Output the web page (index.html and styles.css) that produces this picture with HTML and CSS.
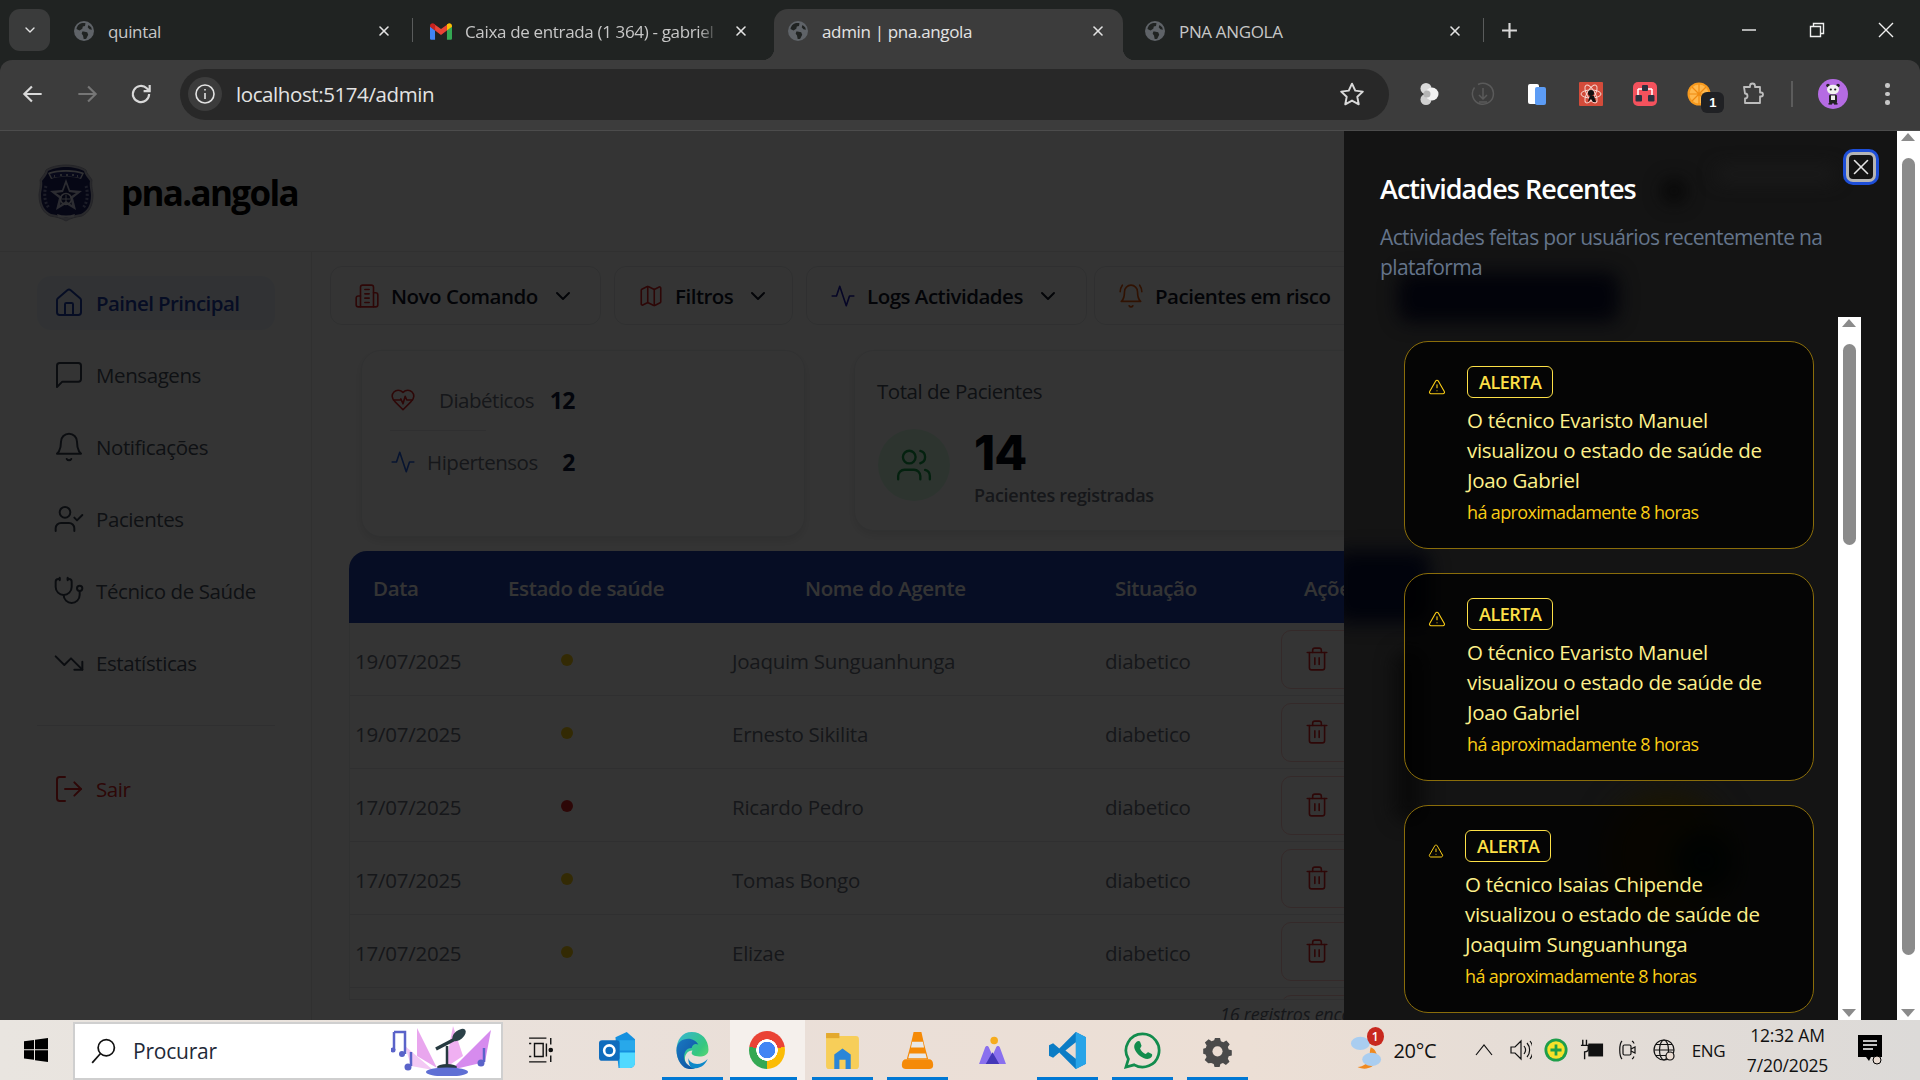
FILE: index.html
```html
<!DOCTYPE html>
<html lang="pt">
<head>
<meta charset="utf-8">
<title>admin | pna.angola</title>
<link rel="stylesheet" href="styles.css">
</head>
<body>
<svg class="sprite" aria-hidden="true">
  <symbol id="i-home" viewBox="0 0 24 24"><path d="M15 21v-8a1 1 0 0 0-1-1h-4a1 1 0 0 0-1 1v8"/><path d="M3 10a2 2 0 0 1 .709-1.528l7-5.999a2 2 0 0 1 2.582 0l7 5.999A2 2 0 0 1 21 10v9a2 2 0 0 1-2 2H5a2 2 0 0 1-2-2z"/></symbol>
  <symbol id="i-msg" viewBox="0 0 24 24"><path d="M21 15a2 2 0 0 1-2 2H7l-4 4V5a2 2 0 0 1 2-2h14a2 2 0 0 1 2 2z"/></symbol>
  <symbol id="i-bell" viewBox="0 0 24 24"><path d="M6 8a6 6 0 0 1 12 0c0 7 3 9 3 9H3s3-2 3-9"/><path d="M10.3 21a1.94 1.94 0 0 0 3.4 0"/></symbol>
  <symbol id="i-ring" viewBox="0 0 24 24"><path d="M6 8a6 6 0 0 1 12 0c0 7 3 9 3 9H3s3-2 3-9"/><path d="M10.3 21a1.94 1.94 0 0 0 3.4 0"/><path d="M4 2C2.8 3.7 2 5.7 2 8"/><path d="M22 8c0-2.3-.8-4.3-2-6"/></symbol>
  <symbol id="i-usercheck" viewBox="0 0 24 24"><path d="M16 21v-2a4 4 0 0 0-4-4H6a4 4 0 0 0-4 4v2"/><circle cx="9" cy="7" r="4"/><path d="m16 11 2 2 4-4"/></symbol>
  <symbol id="i-steth" viewBox="0 0 24 24"><path d="M11 2v2"/><path d="M5 2v2"/><path d="M5 3H4a2 2 0 0 0-2 2v4a6 6 0 0 0 12 0V5a2 2 0 0 0-2-2h-1"/><path d="M8 15a6 6 0 0 0 12 0v-3"/><circle cx="20" cy="10" r="2"/></symbol>
  <symbol id="i-trend" viewBox="0 0 24 24"><path d="m22 17-8.5-8.5-5 5L2 7"/><path d="M16 17h6v-6"/></symbol>
  <symbol id="i-logout" viewBox="0 0 24 24"><path d="M9 21H5a2 2 0 0 1-2-2V5a2 2 0 0 1 2-2h4"/><path d="m16 17 5-5-5-5"/><path d="M21 12H9"/></symbol>
  <symbol id="i-building" viewBox="0 0 24 24"><path d="M6 22V4a2 2 0 0 1 2-2h8a2 2 0 0 1 2 2v18Z"/><path d="M6 12H4a2 2 0 0 0-2 2v6a2 2 0 0 0 2 2h2"/><path d="M18 9h2a2 2 0 0 1 2 2v9a2 2 0 0 1-2 2h-2"/><path d="M10 6h4M10 10h4M10 14h4M10 18h4"/></symbol>
  <symbol id="i-map" viewBox="0 0 24 24"><path d="M14.106 5.553a2 2 0 0 0 1.788 0l3.659-1.83A1 1 0 0 1 21 4.619v12.764a1 1 0 0 1-.553.894l-4.553 2.277a2 2 0 0 1-1.788 0l-4.212-2.106a2 2 0 0 0-1.788 0l-3.659 1.83A1 1 0 0 1 3 19.381V6.618a1 1 0 0 1 .553-.894l4.553-2.277a2 2 0 0 1 1.788 0z"/><path d="M15 5.764v15"/><path d="M9 3.236v15"/></symbol>
  <symbol id="i-activity" viewBox="0 0 24 24"><path d="M22 12h-4l-3 9L9 3l-3 9H2"/></symbol>
  <symbol id="i-chev" viewBox="0 0 24 24"><path d="m6 9 6 6 6-6"/></symbol>
  <symbol id="i-heart" viewBox="0 0 24 24"><path d="M19 14c1.49-1.46 3-3.21 3-5.5A5.5 5.5 0 0 0 16.5 3c-1.76 0-3 .5-4.5 2-1.5-1.5-2.74-2-4.5-2A5.5 5.5 0 0 0 2 8.5c0 2.3 1.5 4.05 3 5.5l7 7Z"/><path d="M3.22 12H9.5l.5-1 2 4.5 2-7 1.5 3.5h5.27"/></symbol>
  <symbol id="i-users" viewBox="0 0 24 24"><path d="M16 21v-2a4 4 0 0 0-4-4H6a4 4 0 0 0-4 4v2"/><circle cx="9" cy="7" r="4"/><path d="M22 21v-2a4 4 0 0 0-3-3.87"/><path d="M16 3.13a4 4 0 0 1 0 7.75"/></symbol>
  <symbol id="i-trash" viewBox="0 0 24 24"><path d="M3 6h18"/><path d="M19 6v14c0 1-1 2-2 2H7c-1 0-2-1-2-2V6"/><path d="M8 6V4c0-1 1-2 2-2h4c1 0 2 1 2 2v2"/><path d="M10 11v6M14 11v6"/></symbol>
  <symbol id="i-warn" viewBox="0 0 24 24"><path d="m21.73 18-8-14a2 2 0 0 0-3.48 0l-8 14A2 2 0 0 0 4 21h16a2 2 0 0 0 1.73-3"/><path d="M12 9v4"/><path d="M12 17h.01"/></symbol>
  <symbol id="i-x" viewBox="0 0 24 24"><path d="M18 6 6 18"/><path d="m6 6 12 12"/></symbol>
  <symbol id="i-globe" viewBox="0 0 20 20"><circle cx="10" cy="10" r="10" fill="#5f6368"/><path d="M5 3.5c2-1.4 4.500-1.800 6.500-1.200l-.5 2.700-2.200.5-.5 2.200L5.500 9.500 2.500 8C2.800 6 3.700 4.500 5 3.500ZM9.500 10.500l3.700.8 1 2.400-2 4.100c-1 .4-1.800.3-2.500.2l-.7-3.500-1.300-1.800.6-2.100ZM14.500 4l2.700 2.200.7 2.600-2.500-.6-1.700-2Z" fill="#202322"/></symbol>
</svg>

<div class="tabstrip">
  <button class="tabsearch" aria-label="Pesquisar separadores"><svg class="ic s16 w2 light"><use href="#i-chev"/></svg></button>
  <div class="tab sep">
    <svg class="favicon"><use href="#i-globe"/></svg>
    <span class="tab-title">quintal</span>
    <svg class="ic tab-close"><use href="#i-x"/></svg>
  </div>
  <div class="tab">
    <svg class="favicon gmail" viewBox="0 0 24 18"><path d="M0 3v13.500C0 17.300.7 18 1.500 18H5.500V8Z" fill="#4285f4"/><path d="M24 3v13.500c0 .8-.7 1.500-1.500 1.500H18.500V8Z" fill="#34a853"/><path d="M5.500 8V1.500L12 6.400l6.500-4.900V8L12 12.900Z" fill="#ea4335"/><path d="M0 3c0-2.500 2.800-3.800 4.800-2.300L5.500 1.200V8L0 3.900Z" fill="#c5221f"/><path d="M24 3c0-2.500-2.800-3.800-4.800-2.300l-.7.500V8L24 3.900Z" fill="#fbbc04"/></svg>
    <span class="tab-title faded">Caixa de entrada (1 364) - gabriel</span>
    <svg class="ic tab-close"><use href="#i-x"/></svg>
  </div>
  <div class="tab active">
    <svg class="favicon"><use href="#i-globe"/></svg>
    <span class="tab-title">admin | pna.angola</span>
    <svg class="ic tab-close"><use href="#i-x"/></svg>
  </div>
  <div class="tab sep">
    <svg class="favicon"><use href="#i-globe"/></svg>
    <span class="tab-title">PNA ANGOLA</span>
    <svg class="ic tab-close"><use href="#i-x"/></svg>
  </div>
  <svg class="newtab" viewBox="0 0 16 16"><path d="M8 1v14M1 8h14"/></svg>
  <div class="winctl">
    <svg viewBox="0 0 16 16"><path d="M1 8h14"/></svg>
    <svg viewBox="0 0 16 16"><path d="M1.500 4.500h10v10h-10zM4.500 4V1.500h10v10H12"/></svg>
    <svg viewBox="0 0 16 16"><path d="m1 1 14 14M15 1 1 15"/></svg>
  </div>
</div>

<div class="toolbar">
  <div class="navbtn"><svg viewBox="0 0 24 24" class="navic"><path d="M20 12H5M11 5l-7 7 7 7"/></svg></div>
  <div class="navbtn dim"><svg viewBox="0 0 24 24" class="navic"><path d="M4 12h15M13 5l7 7-7 7"/></svg></div>
  <div class="navbtn"><svg viewBox="0 0 24 24" class="navic"><path d="M19.500 12a7.500 7.500 0 1 1-2.200-5.300L20 9.400M20 3.800v5.600h-5.600"/></svg></div>
  <div class="omnibox">
    <span class="siteinfo"><svg viewBox="0 0 24 24"><circle cx="12" cy="12" r="9"/><path d="M12 11v6M12 7v1.500"/></svg></span>
    <span class="url">localhost:5174/admin</span>
    <svg class="star" viewBox="0 0 24 24"><path d="M12 2.500 15 8.900l7 .9-5.100 4.800 1.300 6.900L12 18.100l-6.200 3.400 1.300-6.900L2 9.800l7-.9Z"/></svg>
  </div>
  <div class="exts">
    <span class="ext"><svg viewBox="0 0 24 24"><circle cx="9" cy="6.500" r="5.500" fill="#d9d9d9"/><circle cx="9" cy="17.500" r="5.500" fill="#cfcfcf"/><circle cx="15" cy="12" r="6.500" fill="#f2f2f2"/><circle cx="10" cy="12" r="3.500" fill="#b5b5b5"/></svg></span>
    <span class="ext"><svg viewBox="0 0 24 24" fill="none" stroke="#5a5a5a" stroke-width="1.500"><path d="M7 2.500a10.500 10.500 0 1 1-3.500 3"/><path d="M12 6v10M8 13l4 4 4-4M8 20h8"/></svg></span>
    <span class="ext"><svg viewBox="0 0 24 24"><rect x="3" y="2" width="11" height="20" rx="2" fill="#fff"/><rect x="10" y="5" width="11" height="18" rx="2" fill="#5c9cf5"/></svg></span>
    <span class="ext"><svg viewBox="0 0 24 24"><rect width="24" height="24" rx="1" fill="#d34b3a"/><g fill="none" stroke="#f6d9d3" stroke-width="1"><ellipse cx="12" cy="12" rx="10" ry="4"/><ellipse cx="12" cy="12" rx="10" ry="4" transform="rotate(60 12 12)"/><ellipse cx="12" cy="12" rx="10" ry="4" transform="rotate(120 12 12)"/></g><circle cx="12" cy="11" r="3" fill="#111"/><path d="M11 14h4l2 6h-3l-2-3-3 3 1-4Z" fill="#111"/></svg></span>
    <span class="ext"><svg viewBox="0 0 24 24"><rect width="24" height="24" rx="5" fill="#f4525d"/><path d="M5 7h14M5 7v7M19 7v7" stroke="#fff" stroke-width="1.500" fill="none"/><rect x="9" y="3" width="6" height="6" rx="1" fill="#2b3240"/><rect x="2.500" y="13" width="6.500" height="6.500" rx="1" fill="#2b3240"/><rect x="15" y="13" width="6.500" height="6.500" rx="1" fill="#2b3240"/></svg></span>
    <span class="ext badged"><svg viewBox="0 0 24 24"><circle cx="12" cy="12" r="11.500" fill="#f79a1e"/><circle cx="12" cy="12" r="9.500" fill="#ffb84d"/><path d="M12 2v20M2 12h20M5 5l14 14M19 5 5 19" stroke="#f08a10" stroke-width="1.200"/></svg><span class="extbadge">1</span></span>
    <span class="ext"><svg viewBox="0 0 24 24" fill="none" stroke="#bdbdbd" stroke-width="1.800" stroke-linejoin="round"><path d="M3 5h6V4a2.500 2.500 0 0 1 5 0v1h5v5.500h1a2 2 0 0 1 0 4h-1V21H4v-4.500a2.500 2.500 0 0 0 0-5Z"/></svg></span>
  </div>
  <span class="tbsep"></span>
  <span class="avatar"><svg viewBox="0 0 30 30"><circle cx="15" cy="15" r="15" fill="#b56be3"/><circle cx="10" cy="6.500" r="1.800" fill="#222"/><circle cx="20" cy="6.500" r="1.800" fill="#222"/><ellipse cx="15" cy="10.500" rx="6" ry="4.800" fill="#f2f2f2"/><circle cx="12.800" cy="10.500" r="1.100" fill="#222"/><circle cx="17.200" cy="10.500" r="1.100" fill="#222"/><rect x="11" y="15.500" width="8" height="9" rx="1.500" fill="#222"/><rect x="13" y="16.500" width="4" height="4.500" fill="#eee"/><rect x="10.500" y="24" width="3.500" height="1.600" fill="#222"/><rect x="16" y="24" width="3.500" height="1.600" fill="#222"/></svg></span>
  <span class="kebab"><i></i><i></i><i></i></span>
</div>

<div class="screen">
  <div class="viewport">
    <div class="app">
      <header class="apphead">
        <svg class="logo" viewBox="0 0 56 58"><path d="M28 1c8 0 16 2 20 5 1 4 3 5 6 10-1 6 1 12 1 15 0 12-5 18-11 21-6 1-11 2-16 5-5-3-10-4-16-5C6 49 1 43 1 31c0-3 2-9 1-15 3-5 5-6 6-10 4-3 12-5 20-5Z" fill="#c8c8d8" stroke="#b0b0c0" stroke-width="1"/><path d="M28 3c7 0 14 2 18 4 1 4 3 6 6 10-1 5 1 10 1 14 0 11-4 16-10 19-6 1-10 2-15 4-5-2-9-3-15-4C7 47 3 42 3 31c0-4 2-9 1-14 3-4 5-6 6-10 4-2 11-4 18-4Z" fill="#1f2468"/><path d="M10 9c8-4 28-4 36 0l-3 6c-7-3-23-3-30 0Z" fill="#f0f0f8"/><path d="M12 10c8-3 24-3 32 0l-2 4c-7-2-21-2-28 0Z" fill="#2a2f80"/><path d="M16 12h1M22 11h2M28 11h2M34 11h2M39 12h1" stroke="#fff" stroke-width="1.500"/><path d="M28 15l4 11 12 1-9 7 3 12-10-6-10 6 3-12-9-7 12-1Z" fill="#d6d8f0"/><path d="M28 20l3 8 7 1-6 4 2 8-6-4-6 4 2-8-6-4 7-1Z" fill="#1a1e58"/><circle cx="28" cy="35" r="5.500" fill="none" stroke="#e8e8f8" stroke-width="1.500"/><path d="M24 35h8M28 31v8" stroke="#e8e8f8"/><path d="M8 22c-2 6-2 16 3 22M48 22c2 6 2 16-3 22" fill="none" stroke="#8a8ec0" stroke-width="3" stroke-dasharray="2 2"/><path d="M19 50c6 2 12 2 18 0l-1 3c-5 1-11 1-16 0Z" fill="#e8e8f4"/></svg>
        <span class="brand">pna.angola</span>
      </header>
      <div class="appbody">
        <nav class="sidebar">
          <a class="navitem current"><svg class="ic s32"><use href="#i-home"/></svg><span>Painel Principal</span></a>
          <a class="navitem"><svg class="ic s32"><use href="#i-msg"/></svg><span>Mensagens</span></a>
          <a class="navitem"><svg class="ic s32"><use href="#i-bell"/></svg><span>Notificações</span></a>
          <a class="navitem"><svg class="ic s32"><use href="#i-usercheck"/></svg><span>Pacientes</span></a>
          <a class="navitem"><svg class="ic s32"><use href="#i-steth"/></svg><span>Técnico de Saúde</span></a>
          <a class="navitem"><svg class="ic s32"><use href="#i-trend"/></svg><span>Estatísticas</span></a>
          <hr class="navrule">
          <a class="navitem logout"><svg class="ic s32"><use href="#i-logout"/></svg><span>Sair</span></a>
        </nav>
        <main class="content">
          <div class="actions">
            <button class="action a1"><svg class="ic s26 red"><use href="#i-building"/></svg><span>Novo Comando</span><svg class="ic s24 w2 ink"><use href="#i-chev"/></svg></button>
            <button class="action a2"><svg class="ic s26 red"><use href="#i-map"/></svg><span>Filtros</span><svg class="ic s24 w2 ink"><use href="#i-chev"/></svg></button>
            <button class="action a3"><svg class="ic s26 indigo"><use href="#i-activity"/></svg><span>Logs Actividades</span><svg class="ic s24 w2 ink"><use href="#i-chev"/></svg></button>
            <button class="action a4"><svg class="ic s26 orange"><use href="#i-ring"/></svg><span>Pacientes em risco</span></button>
          </div>
          <div class="stats">
            <section class="card conditions">
              <div class="cond c1"><svg class="ic s26 red"><use href="#i-heart"/></svg><span class="cond-label">Diabéticos</span><b>12</b></div>
              <hr class="condrule">
              <div class="cond c2"><svg class="ic s26 blue"><use href="#i-activity"/></svg><span class="cond-label">Hipertensos</span><b>2</b></div>
            </section>
            <section class="card total">
              <h3>Total de Pacientes</h3>
              <div class="total-row">
                <span class="total-ic"><svg class="ic s38 green"><use href="#i-users"/></svg></span>
                <div><div class="total-num">14</div><div class="total-sub">Pacientes registradas</div></div>
              </div>
            </section>
          </div>
          <div class="table">
            <div class="thead"><span>Data</span><span>Estado de saúde</span><span>Nome do Agente</span><span>Situação</span><span>Ações</span></div>
            <div class="tbody">
              <div class="trow"><span>19/07/2025</span><i class="dot warn"></i><span>Joaquim Sunguanhunga</span><span>diabetico</span><button class="del"><svg class="ic s26 red"><use href="#i-trash"/></svg></button></div>
              <div class="trow"><span>19/07/2025</span><i class="dot warn"></i><span>Ernesto Sikilita</span><span>diabetico</span><button class="del"><svg class="ic s26 red"><use href="#i-trash"/></svg></button></div>
              <div class="trow"><span>17/07/2025</span><i class="dot bad"></i><span>Ricardo Pedro</span><span>diabetico</span><button class="del"><svg class="ic s26 red"><use href="#i-trash"/></svg></button></div>
              <div class="trow"><span>17/07/2025</span><i class="dot warn"></i><span>Tomas Bongo</span><span>diabetico</span><button class="del"><svg class="ic s26 red"><use href="#i-trash"/></svg></button></div>
              <div class="trow"><span>17/07/2025</span><i class="dot warn"></i><span>Elizae</span><span>diabetico</span><button class="del"><svg class="ic s26 red"><use href="#i-trash"/></svg></button></div>
              <div class="trow tail"><button class="del"></button></div>
            </div>
            <div class="tfoot">16 registros encontrados</div>
          </div>
        </main>
      </div>
    </div>
    <div class="dim-layer"></div>
    <aside class="drawer">
      <i class="blob b-btn"></i><i class="blob b-user"></i><i class="blob b-name"></i><i class="blob b-head"></i><i class="blob b-col"></i><i class="blob b-sun"></i><i class="blob b-leaf"></i>
      <button class="drawer-close" aria-label="Fechar"><svg class="ic s26 w15 pale"><use href="#i-x"/></svg></button>
      <h2>Actividades Recentes</h2>
      <p class="drawer-sub">Actividades feitas por usuários recentemente na plataforma</p>
      <div class="feed">
        <div class="feed-list">
          <article class="alert">
            <svg class="ic alert-ic"><use href="#i-warn"/></svg>
            <div><span class="alert-tag">ALERTA</span><p>O técnico Evaristo Manuel visualizou o estado de saúde de Joao Gabriel</p><time>há aproximadamente 8 horas</time></div>
          </article>
          <article class="alert">
            <svg class="ic alert-ic"><use href="#i-warn"/></svg>
            <div><span class="alert-tag">ALERTA</span><p>O técnico Evaristo Manuel visualizou o estado de saúde de Joao Gabriel</p><time>há aproximadamente 8 horas</time></div>
          </article>
          <article class="alert narrow">
            <svg class="ic alert-ic"><use href="#i-warn"/></svg>
            <div><span class="alert-tag">ALERTA</span><p>O técnico Isaias Chipende visualizou o estado de saúde de Joaquim Sunguanhunga</p><time>há aproximadamente 8 horas</time></div>
          </article>
        </div>
        <div class="sbar inner"><i class="up"></i><i class="thumb"></i><i class="down"></i></div>
      </div>
    </aside>
  </div>
  <div class="sbar page"><i class="up"></i><i class="thumb"></i><i class="down"></i></div>
</div>

<footer class="taskbar">
  <div class="start"><svg viewBox="0 0 24 24"><path d="M0 3.300 10 2v9.300H0ZM11 1.800 24 0v11.300H11ZM0 12.300h10v9.500L0 20.500ZM11 12.300h13V24l-13-1.800Z" fill="#000"/></svg></div>
  <div class="searchbox">
    <svg class="lens" viewBox="0 0 24 24"><circle cx="15" cy="9" r="7.500"/><path d="M9.500 14.500 2 23"/></svg>
    <span>Procurar</span>
    <svg class="searchart" viewBox="0 0 102 50">
      <path d="M26 2 46 42 26 30Z" fill="#e9a6ee"/><path d="M62 0 54 42 72 30Z" fill="#f0b0f2"/><path d="M100 4 60 44 94 36Z" fill="#d68bee"/><path d="M14 20 42 44 20 40Z" fill="#f3c8f4"/>
      <path d="M3 6h11v22M3 6v18" stroke="#5a63c9" stroke-width="2.500" fill="none"/><circle cx="2" cy="24" r="2.500" fill="#5a63c9"/><circle cx="11" cy="28" r="3" fill="#5a63c9"/>
      <path d="M20 26v14" stroke="#5a63c9" stroke-width="2.500"/><circle cx="17" cy="41" r="3.500" fill="#5a63c9"/>
      <path d="M93 22v14" stroke="#5a63c9" stroke-width="2.500"/><circle cx="90" cy="37" r="3.500" fill="#5a63c9"/>
      <path d="M66 12 45 23" stroke="#263a40" stroke-width="3.500"/><ellipse cx="68" cy="9" rx="4.500" ry="8" transform="rotate(50 68 9)" fill="#2b4148"/>
      <path d="M56 20v22" stroke="#263a40" stroke-width="2.500"/><ellipse cx="56" cy="41" rx="10" ry="3" fill="#263a40"/><ellipse cx="56" cy="46" rx="21" ry="4.500" fill="#5f6fd4"/>
    </svg>
  </div>
  <div class="taskview"><svg viewBox="0 0 24 24"><path d="M1 1h16M1 23h16M6 6h8v12H6zM1 6h2M1 18h2M17 6v12M21 1v6M21 17v6" /><circle cx="21" cy="12" r="1.500" fill="#111"/></svg></div>
  <div class="app-ic"><svg viewBox="0 0 36 36"><path d="M16 5 27 0l8 7v22c0 4-2 6-5 6H19Z" fill="#1490df"/><path d="M20 8h15v10H20Z" fill="#28a8ea"/><path d="M20 20h15v10c0 3-2 5-5 5H20Z" fill="#50d9ff"/><rect x="0" y="8" width="20" height="20" rx="3" fill="#0f6cbd"/><circle cx="10" cy="18" r="5" fill="none" stroke="#fff" stroke-width="2.500"/></svg></div>
  <div class="app-ic running"><svg viewBox="0 0 38 44"><defs><linearGradient id="edgeA" x1="0" y1="0" x2="1" y2="1"><stop offset="0" stop-color="#37b5d6"/><stop offset=".6" stop-color="#35c77f"/><stop offset="1" stop-color="#7ae36a"/></linearGradient><linearGradient id="edgeB" x1="0" y1="0" x2="1" y2="1"><stop offset="0" stop-color="#1a78c2"/><stop offset="1" stop-color="#0d4f9e"/></linearGradient></defs><path d="M18 0C30 0 38 9 38 21c0 6-5 8-11 8-6 0-9-2-9-4 0-1 .5-2 1-3-6 0-9 5-9 10 0 6 5 11 12 12C9 45 0 35 0 22 0 9 7 0 18 0Z" fill="url(#edgeA)"/><path d="M0 22C0 12 7 8 14 8c5 0 10 3 12 7-4-2-7 0-8 4-7 0-9 6-9 11 0 6 5 11 13 13-3 1-5 1-7 1C7 44 0 33 0 22Z" fill="url(#edgeB)"/><path d="M14 31c2 8 15 10 23 1-4 10-13 12-19 11-3-3-4-7-4-12Z" fill="#0e88c9"/></svg></div>
  <div class="app-ic running focus"><span class="chrome"></span></div>
  <div class="app-ic running"><svg viewBox="-2 0 36 36"><path d="M0 4c0-2 1-3 3-3h7l3 3h16c2 0 3 1 3 3v26c0 2-1 3-3 3H3c-2 0-3-1-3-3Z" fill="#f7ce59"/><path d="M0 1h13v5H0Z" fill="#e3a92e"/><path d="M8 36V22l8-6 8 6v14h-5v-9h-6v9Z" fill="#2a86d8"/></svg></div>
  <div class="app-ic running"><svg viewBox="0 0 32 38"><path d="M12 0h8l3 13 4 15H5l4-15Z" fill="#f58a07"/><path d="M10.500 10h11l1.200 6H9.300ZM7.800 22h16.400l1.300 5H6.500Z" fill="#e8e8e8"/><path d="M4 28h24c2 0 4 2 4 5v2c0 2-2 3-4 3H4c-2 0-4-1-4-3v-2c0-3 2-5 4-5Z" fill="#f58a07"/></svg></div>
  <div class="app-ic"><svg viewBox="-4 -5 44 44"><circle cx="20" cy="5" r="4.500" fill="#f6ac1d"/><path d="M2 33 9 14c1-3 4-3 5 0l4 9 4-9c1-3 4-3 5 0l7 19Z" fill="#8a70ee"/><path d="M10 33 18 19l8 14Z" fill="#4437b8"/></svg></div>
  <div class="app-ic running"><svg viewBox="0 0 36 36"><path d="M26 0 36 5v26l-10 5L10 20l-6 5-4-2V13l4-2 6 5Z" fill="#0b7cc5"/><path d="M26 0 36 5v26l-10 5Z" fill="#28a4e8"/><path d="M26 10v16l-10-8Z" fill="#eadcd2"/></svg></div>
  <div class="app-ic running"><svg viewBox="0 0 38 38"><path d="M19 2a17 17 0 0 0-14.500 25.800L2 36l8.500-2.300A17 17 0 1 0 19 2Z" fill="none" stroke="#128c4d" stroke-width="2.800"/><path d="M13 10c1-1 3-1 3.500 0l1.500 4c.2.600-1.500 2.400-1.500 3 1 2.500 3 4.500 5.500 5.500.7 0 2-2 3-1.800l3.500 1.800c.8.500.5 2.500-.5 3.500-2 2-5 2-8 .7-5-2-9-7-9.500-11-.2-2.200.7-4 2.500-5.700Z" fill="#128c4d"/></svg></div>
  <div class="app-ic running"><svg viewBox="-6 -6 44 44"><path d="M13 1h6l1 4 3 1.300L26.500 4l4 4.500-2.200 3.300 1 3 3.700 1v6l-3.700 1-1 3 2 3.500-4.300 3.800-3.500-2.200-3 1.100-1 3.500h-6l-1-3.500-3-1.100L5 31.200.8 27.400 3 23.800l-1.200-3L-1 20v-6l3-1 1.100-3L1 6.400 5.400 2.600 9 5l3-1.100Z" fill="#4a4a4a"/><circle cx="16" cy="17" r="6" fill="#eadcd2"/></svg></div>
  <div class="weather">
    <span class="weather-ic"><svg viewBox="0 0 34 42"><path d="M22 18c6 2 8 10 6 15-3 7-12 10-20 6 6 0 12-4 13-11 0-4 0-7 1-10Z" fill="#f08a20"/><ellipse cx="11" cy="14" rx="10" ry="7" fill="#a9cdf0"/><ellipse cx="23" cy="31" rx="10" ry="7" fill="#a9cdf0"/></svg><b class="w-badge">1</b></span>
    <span class="temp">20°C</span>
  </div>
  <div class="tray">
    <span><svg viewBox="0 0 24 24"><path d="m4 17 8-10 8 10"/></svg></span>
    <span><svg viewBox="0 0 24 24"><path d="M3 9h4l6-6v18l-6-6H3ZM16 8c2 2.500 2 5.500 0 8M19 5c3.500 4 3.500 10 0 14M22 3c4 5 4 13 0 18"/></svg></span>
    <span><svg viewBox="0 0 26 26" class="plain"><circle cx="13" cy="13" r="12.500" fill="#1e9e4a"/><circle cx="13" cy="13" r="9.500" fill="#f5e12a"/><path d="M13 7v12M7 13h12" stroke="#1e9e4a" stroke-width="3"/></svg></span>
    <span><svg viewBox="0 0 26 24" class="plain"><rect x="9" y="5" width="16" height="14" fill="#111"/><path d="M3 1v6M7 1v6M1 7h8v4c0 2-2 3-4 3v8" stroke="#111" fill="none" stroke-width="1.500"/></svg></span>
    <span><svg viewBox="0 0 24 24"><rect x="7" y="7" width="8" height="10" rx="1.500"/><path d="m15 11 4-2v6l-4-2M6 3C3 6 3 18 6 21M16 3c1 .6 1.800 1.500 2 2.500M18 18.500c-.4 1-1 2-2 2.500"/></svg></span>
    <span><svg viewBox="0 0 24 24"><circle cx="12" cy="12" r="10"/><ellipse cx="12" cy="12" rx="4.500" ry="10"/><path d="M2 12h20M4 6.500h16M4 17.500h16"/><circle cx="18" cy="18" r="4" fill="#eadcd2"/></svg></span>
  </div>
  <span class="lang">ENG</span>
  <div class="clock"><span>12:32 AM</span><span>7/20/2025</span></div>
  <div class="notif"><svg viewBox="0 0 24 30"><path d="M0 0h24v22H13l-2 4-3-4H0Z" fill="#000"/><path d="M5 6h14M5 10h14M5 14h10" stroke="#fff" stroke-width="1.500"/><circle cx="19" cy="25" r="4" fill="#eadcd2" stroke="#000"/></svg></div>
</footer>
</body>
</html>
```

FILE: styles.css
```css
* { box-sizing: border-box; }
html, body { margin: 0; width: 1920px; height: 1080px; overflow: hidden; }
body {
  display: flex; flex-direction: column;
  font-family: "Open Sans", "Noto Sans", "Liberation Sans", sans-serif;
  letter-spacing: -.03em;
  background: #202322;
}
.sprite { display: none; }
button { font: inherit; letter-spacing: inherit; border: 0; background: none; padding: 0; color: inherit; }
h2, h3, p { margin: 0; font-weight: inherit; }
i { font-style: normal; display: block; }

.ic { fill: none; stroke: currentColor; stroke-width: 1.5; stroke-linecap: round; stroke-linejoin: round; flex: none; }
.s16 { width: 16px; height: 16px; } .s24 { width: 24px; height: 24px; } .s26 { width: 26px; height: 26px; }
.s30 { width: 30px; height: 30px; } .s32 { width: 32px; height: 32px; } .s38 { width: 38px; height: 38px; }
.w2 { stroke-width: 2; } .w15 { stroke-width: 1.5; }
.light { color: #e3e3e3; } .pale { color: #e5e5e5; }
.ink { color: #111827; } .red { color: #dc2626; } .blue { color: #2563eb; } .indigo { color: #1e1eb8; } .orange { color: #ea580c; } .green { color: #16a34a; }

/* browser chrome */
.tabstrip { height: 60px; flex: none; display: flex; align-items: flex-start; padding-left: 9px; background: #202322; font-size: 17px; color: #c7c7c7; letter-spacing: -.02em; }
.tabsearch { width: 41px; height: 42px; margin: 9px 10px 0 0; border-radius: 11px; background: #3a3b3b; display: flex; align-items: center; justify-content: center; }
.tab { position: relative; width: 349px; height: 51px; margin: 9px 8px 0 0; padding: 0 17px 7px 14px; display: flex; align-items: center; gap: 14px; border-radius: 14px 14px 0 0; }
.tab.sep::after { content: ""; position: absolute; right: -4px; top: 9px; height: 24px; width: 1px; background: #5a5c5c; }
.tab.active { background: #3c3c3c; color: #e3e3e3; }
.tab.active::before { content: ""; position: absolute; left: -12px; bottom: 0; width: 12px; height: 12px; background: radial-gradient(circle at 0 0, transparent 12px, #3c3c3c 12.5px); }
.tab.active::after { content: ""; position: absolute; right: -12px; bottom: 0; width: 12px; height: 12px; background: radial-gradient(circle at 100% 0, transparent 12px, #3c3c3c 12.5px); }
.favicon { width: 20px; height: 20px; flex: none; }
.favicon.gmail { width: 22px; height: 17px; margin-right: -1px; margin-left: -1px; }
.tab-title { flex: 1; min-width: 0; white-space: nowrap; overflow: hidden; }
.tab-title.faded { -webkit-mask-image: linear-gradient(90deg, #000 92%, transparent); mask-image: linear-gradient(90deg, #000 92%, transparent); }
.tab-close { width: 16px; height: 16px; color: #e3e3e3; stroke-width: 2.4; }
.newtab { width: 17px; height: 17px; fill: none; stroke: #d8d8d8; stroke-width: 2; margin: 22px 0 0 13px; }
.winctl { margin-left: auto; display: flex; }
.winctl svg { width: 16px; height: 16px; margin: 22px 26.3px 0; fill: none; stroke: #f0f0f0; stroke-width: 1.4; }

.toolbar { height: 71px; flex: none; display: flex; align-items: center; padding: 0 0 2px 6px; background: #3c3c3c; border-radius: 12px 12px 0 0; border-bottom: 1px solid #4c4c4c; }
.navbtn { width: 54px; display: flex; justify-content: center; }
.navic { width: 26px; height: 26px; fill: none; stroke: #d9d9d9; stroke-width: 2; }
.navbtn.dim .navic { stroke: #767676; }
.omnibox { width: 1209px; height: 51px; margin-left: 12px; border-radius: 26px; background: #282828; display: flex; align-items: center; padding: 0 24px 0 8px; color: #e3e3e3; font-size: 20.5px; letter-spacing: -.02em; }
.siteinfo { width: 34px; height: 34px; border-radius: 50%; background: #3c3c3c; display: flex; align-items: center; justify-content: center; margin-right: 14px; }
.siteinfo svg { width: 24px; height: 24px; fill: none; stroke: #e3e3e3; stroke-width: 1.6; }
.url { flex: 1; }
.star { width: 26px; height: 26px; fill: none; stroke: #d9d9d9; stroke-width: 1.8; stroke-linejoin: round; }
.exts { display: flex; margin-left: 13px; }
.ext { position: relative; width: 54px; display: flex; justify-content: center; }
.ext svg { width: 24px; height: 24px; }
.extbadge { position: absolute; left: 29px; top: 10px; width: 23px; height: 21px; border-radius: 6px; background: #202124; color: #fff; font-size: 13px; font-weight: 700; text-align: center; line-height: 21px; font-family: "Liberation Sans", sans-serif; }
.tbsep { width: 2px; height: 26px; background: #5c5c5c; margin-left: 11px; }
.avatar { margin-left: 25px; width: 30px; height: 30px; }
.avatar svg { display: block; width: 30px; height: 30px; }
.kebab { margin-left: 37px; display: flex; flex-direction: column; gap: 4px; }
.kebab i { width: 4.5px; height: 4.5px; border-radius: 50%; background: #c7c7c7; }

/* page */
.screen { flex: 1; display: flex; min-height: 0; }
.viewport { position: relative; flex: 1; overflow: hidden; background: #fff; }
.app { height: 100%; display: flex; flex-direction: column; color: #111; }
.dim-layer { position: absolute; inset: 0; background: rgba(0,0,0,.795); }

.apphead { height: 121px; flex: none; display: flex; align-items: center; padding-left: 38px; gap: 27px; border-bottom: 1px solid #e8e8e8; }
.logo { width: 56px; height: 58px; margin-top: 4px; }
.brand { font-size: 35px; font-weight: 700; color: #000; margin-top: 3px; letter-spacing: -.048em; }
.appbody { flex: 1; display: flex; min-height: 0; }
.sidebar { width: 312px; flex: none; padding: 24px 36px 0 37px; border-right: 1px solid #e8e8e8; display: flex; flex-direction: column; gap: 18px; }
.navitem { height: 54px; display: flex; align-items: center; gap: 11px; padding-left: 16px; border-radius: 14px; font-size: 20.5px; color: #4b5563; letter-spacing: -.02em; }
.navitem .ic { color: #374151; }
.navitem.current { background: #eff6ff; color: #1e40af; font-weight: 600; letter-spacing: -.028em; }
.navitem.current .ic { color: #1e40af; }
.navitem.logout { color: #dc2626; }
.navitem.logout .ic { color: #dc2626; }
.navrule { width: 100%; margin: 17px 0 18px; border: 0; border-top: 1px solid #e5e7eb; }

.content { flex: 1; min-width: 0; overflow: hidden; padding-top: 14px; }
.actions { display: flex; margin-left: 18px; }
.action { height: 59px; border: 1px solid #e5e7eb; border-radius: 12px; display: flex; align-items: center; font-size: 20.5px; font-weight: 600; color: #111827; padding-left: 23px; margin-right: 13px; flex: none; letter-spacing: -.024em; }
.action span { margin: 0 13px 0 11px; }
.a1 { width: 271px; } .a2 { width: 179px; } .a3 { width: 281px; margin-right: 7px; } .a4 { width: 300px; }

.stats { display: flex; align-items: flex-start; margin: 25px 0 0 49px; }
.card { border: 1px solid #eceef1; border-radius: 20px; box-shadow: 0 4px 10px rgba(0,0,0,.1); background: #fff; flex: none; }
.conditions { width: 444px; height: 187px; padding: 29px 0 0 28px; margin-right: 49px; }
.cond { width: 185px; height: 40px; display: flex; align-items: center; font-size: 20.5px; color: #6b7280; }
.cond b { margin-left: auto; font-size: 23px; color: #111c3a; font-weight: 700; }
.c1 .cond-label { margin-left: 23px; }
.c2 .cond-label { margin-left: 11px; }
.condrule { width: 96px; margin: 10px 0 11px; border: 0; border-top: 1px solid #e5e7eb; }
.total { width: 520px; height: 181px; padding: 25px 0 0 22px; }
.total h3 { font-size: 20.5px; line-height: 30px; color: #4b5563; font-weight: 400; }
.total-row { display: flex; margin: 23px 0 0 1px; gap: 24px; }
.total-ic { width: 72px; height: 72px; border-radius: 50%; background: #dcfce7; display: flex; align-items: center; justify-content: center; }
.total-num { font-size: 48px; line-height: 52px; margin-top: -2px; font-weight: 800; color: #030712; font-family: "Inter", sans-serif; letter-spacing: -.02em; }
.total-sub { font-size: 18px; font-weight: 600; color: #6b7280; line-height: 30px; letter-spacing: -.016em; margin-top: 1px; }

.table { margin: 14px 0 0 37px; width: 1083px; font-size: 20.5px; color: #6b7280; letter-spacing: -.012em; }
.thead { height: 72px; background: #1e40af; border-radius: 18px 18px 0 0; color: #fff; font-weight: 600; display: grid; grid-template-columns: 135px 297px 310px 189px 1fr; align-items: center; padding: 2px 0 0 24px; letter-spacing: -.017em; }
.tbody { height: 376px; overflow: hidden; border-left: 1px solid #eceef1; }
.trow { height: 73px; display: grid; grid-template-columns: 206px 171px 373px 176px 1fr; align-items: center; padding-left: 5px; border-bottom: 1px solid #e5e7eb; }
.trow > span { padding-top: 3px; }
.dot { width: 12px; height: 12px; border-radius: 50%; margin-top: 2px; }
.dot.warn { background: #facc15; }
.dot.bad { background: #dc2626; }
.del { width: 100px; height: 59px; border: 1px solid #fecaca; border-radius: 10px; display: flex; align-items: center; justify-content: center; padding-right: 28px; }
.trow.tail { display: block; padding: 7px 0 0 931px; border: 0; }
.tfoot { border-top: 1px solid #e5e7eb; padding: 2px 0 0 871px; font-size: 18px; font-style: italic; color: #6b7280; white-space: nowrap; }

/* drawer */
.drawer { position: absolute; right: 0; top: 0; bottom: 0; width: 553px; background: #141414; padding: 40px 36px 0; color: #fff; overflow: hidden; display: flex; flex-direction: column; }
.blob { position: absolute; filter: blur(9px); border-radius: 12px; }
.b-btn { left: 54px; top: 141px; width: 221px; height: 50px; background: #02030a; }
.b-user { left: 318px; top: 48px; width: 24px; height: 24px; border-radius: 50%; background: #060606; }
.b-name { left: 372px; top: 36px; width: 120px; height: 14px; background: #1b1b1b; }
.b-head { left: -10px; top: 420px; width: 96px; height: 72px; background: #01030c; }
.b-col { left: 50px; top: 520px; width: 30px; height: 170px; background: #0a0a0a; }
.b-sun { left: 262px; top: 660px; width: 120px; height: 130px; background: #1a1500; border-radius: 50%; filter: blur(16px); }
.b-leaf { left: 330px; top: 700px; width: 60px; height: 60px; background: #000a08; border-radius: 50%; filter: blur(12px); }
.drawer-close { position: absolute; left: 502px; top: 21px; width: 30px; height: 30px; border: 3px solid #b5b5b5; border-radius: 7px; box-shadow: 0 0 0 3px #1d4ed8; background: #141414; display: flex; align-items: center; justify-content: center; }
.drawer h2 { position: relative; font-size: 27px; line-height: 36px; font-weight: 600; letter-spacing: -.035em; }
.drawer-sub { position: relative; margin-top: 15px; font-size: 21px; line-height: 30px; color: #64748b; width: 480px; letter-spacing: -.03em; }
.feed { position: relative; display: flex; margin: 35px 0 0 24px; flex: 1; min-height: 0; }
.feed-list { width: 434px; padding-top: 24px; display: flex; flex-direction: column; gap: 24px; }
.alert { width: 410px; height: 208px; flex: none; border: 1px solid #8a6d0a; border-radius: 24px; background: rgba(0,0,0,.72); display: flex; padding: 24px 0 0 23px; gap: 21px; }
.alert-ic { width: 18px; height: 18px; margin-top: 12px; color: #facc15; }
.alert.narrow .alert-ic { width: 16px; height: 16px; margin-top: 13px; }
.alert-tag { display: inline-block; height: 32px; padding: 0 11px; border: 1px solid #fde047; border-radius: 6px; color: #fde047; font-size: 18px; font-weight: 600; line-height: 30px; }
.alert p { margin-top: 7px; width: 310px; font-size: 20.5px; line-height: 30px; color: #fef08a; letter-spacing: -.014em; }
.alert time { display: block; margin-top: 4px; font-size: 18px; line-height: 26px; color: #facc15; letter-spacing: -.036em; }

.sbar { position: relative; width: 23px; flex: none; background: #fff; }
.sbar .thumb { position: absolute; left: 5px; width: 13px; background: #8b8b8b; border-radius: 7px; }
.sbar .up, .sbar .down { position: absolute; left: 4px; width: 0; height: 0; border: 7.500px solid transparent; }
.sbar .up { top: 2px; border-bottom: 8px solid #8b8b8b; border-top: 0; }
.sbar .down { bottom: 3px; border-top: 8px solid #8b8b8b; border-bottom: 0; }
.sbar.page .thumb { top: 27px; height: 797px; }
.sbar.inner .thumb { top: 27px; height: 201px; }

/* taskbar */
.taskbar { height: 60px; flex: none; display: flex; align-items: center; background: linear-gradient(90deg, #e9e5e0 0, #eadfd8 40%, #ecdfd5 65%, #dcdad8 100%); color: #111; letter-spacing: -.02em; }
.start { width: 73px; display: flex; padding-left: 24px; }
.start svg { width: 24px; height: 24px; }
.searchbox { width: 430px; height: 58px; background: #fff; border: 2px solid #cfcfcf; display: flex; align-items: center; padding-left: 15px; font-size: 21px; color: #1f2937; margin-top: 1px; letter-spacing: -.01em; }
.lens { width: 26px; height: 26px; fill: none; stroke: #111; stroke-width: 1.6; margin-right: 17px; }
.searchbox span { flex: 1; }
.searchart { width: 102px; height: 50px; margin-right: 8px; }
.taskview { width: 76.500px; display: flex; justify-content: center; }
.taskview svg { width: 26px; height: 26px; fill: none; stroke: #111; stroke-width: 1.3; }
.app-ic { position: relative; width: 75px; height: 60px; display: flex; align-items: center; justify-content: center; }
.app-ic svg { width: 37px; height: 37px; }
.app-ic.running::after { content: ""; position: absolute; left: 7px; right: 7px; bottom: 0; height: 3px; background: #0078d4; }
.app-ic.focus { background: #f5f0ec; }
.app-ic.focus::after { left: 0; right: 8px; }
.chrome { width: 36px; height: 38px; border-radius: 50%; background: radial-gradient(circle, #4285f4 0 8px, #fff 8.500px 10.500px, transparent 11px), conic-gradient(from 180deg, #34a853 0 100deg, #ea4335 100deg 260deg, #fbbc05 260deg 360deg); }
.weather { display: flex; align-items: center; margin-left: 95px; gap: 12px; }
.weather-ic { position: relative; width: 32px; height: 42px; }
.weather-ic svg { width: 32px; height: 42px; display: block; }
.w-badge { position: absolute; left: 17px; top: -2px; width: 17px; height: 19px; border-radius: 50%; background: #c8281e; color: #fff; font-size: 12px; font-weight: 600; line-height: 19px; text-align: center; }
.temp { font-size: 20px; width: 42px; white-space: nowrap; }
.tray { display: flex; margin-left: 30px; }
.tray span { width: 36px; display: flex; justify-content: center; }
.tray svg { width: 24px; height: 24px; fill: none; stroke: #111; stroke-width: 1.2; }
.tray svg.plain { stroke: none; }
.lang { width: 54px; text-align: center; font-size: 17px; }
.clock { width: 104px; display: flex; flex-direction: column; align-items: center; gap: 8px; font-size: 17.5px; line-height: 22px; letter-spacing: -.01em; }
.notif { width: 60px; display: flex; justify-content: center; }
.notif svg { width: 24px; height: 30px; }
```
